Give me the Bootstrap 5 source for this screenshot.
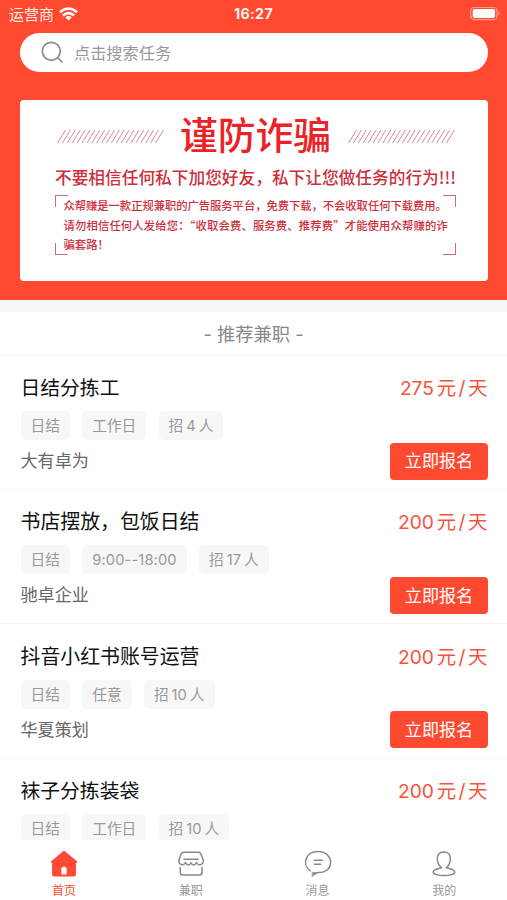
<!DOCTYPE html>
<html lang="zh-CN">
<head>
<meta charset="utf-8">
<meta name="viewport" content="width=device-width, initial-scale=1">
<title>推荐兼职</title>
<link href="https://cdn.jsdelivr.net/npm/bootstrap@5.3.0/dist/css/bootstrap.min.css" rel="stylesheet">
<style>
:root{--accent:#ff4a31}
body{font-family:Inter,"Noto Sans CJK SC",sans-serif;color:#111;line-height:1}
.app{height:900px}
.hero{background:var(--accent);height:300px;flex:none}
.status{height:33px;padding:0 6px 5px 9px;display:grid;grid-template-columns:1fr auto 1fr}
.carrier{font-size:15px;color:#ffe9e5}
.clock{font-size:14.2px;letter-spacing:.35px;color:#fff2f0;margin-right:3px}
.search{height:39px;margin:0 19px 0 20px;padding-left:21px;color:#999;font-size:16.2px}
.search span{margin-left:10px;padding-top:1px}
.banner{height:181px;margin:28px 19px 0 20px;border-radius:4px;padding:12px 32px 0 35px;font-family:"Noto Sans CJK SC",sans-serif;color:#cd2f3c}
.headline{height:48px}
.headline svg{margin-left:1px;margin-right:-1px}
.headline strong{font-size:37.8px;font-weight:500;color:#ec2227;padding-bottom:6px}
.warn{font-size:16.7px;font-weight:500;height:34px;line-height:34px}
.notice{width:401px;height:60px;margin-top:1px;padding:1px 0 0 8.5px;font-size:11.35px;font-weight:500;line-height:19.7px;
--c:linear-gradient(#d06a75,#d06a75);
background:var(--c) 0 0/13px 1px,var(--c) 0 0/1px 12px,var(--c) 100% 0/13px 1px,var(--c) 100% 0/1px 12px,var(--c) 0 100%/13px 1px,var(--c) 0 100%/1px 12px,var(--c) 100% 100%/13px 1px,var(--c) 100% 100%/1px 12px;background-repeat:no-repeat}
.line-a{letter-spacing:-.07px}
.line-b{letter-spacing:.13px}
.strip{height:12px;background:#f7f7f7;flex:none}
.heading{height:43.5px;padding-top:4px;color:#888;font-size:18.3px;flex:none;border-bottom:1px solid #f5f5f5}
.job{height:134.45px;padding:20.5px 19.5px 0 20.5px;border-bottom:1.5px solid #f6f6f6;flex:none}
.job-title{font-size:19.8px;line-height:25px;height:25px}
.job-title.wide{font-size:19.9px}
.price{font-size:19.4px;color:#f5533e;line-height:25px;gap:3px}
.price span{letter-spacing:2.5px;margin-right:-2.5px}
.price b{font-weight:400;font-size:19.2px;letter-spacing:-.1px}
.tags{gap:12.3px;margin-top:10px}
.tag{height:29px;padding:1px 10px 0;border-radius:5px;background:#f7f7f7;color:#999;font-size:14.7px;gap:3px}
.hours{letter-spacing:.12px}
.firm{font-size:17.1px;color:#666;padding-top:1px}
.apply{width:98px;height:37px;border-radius:4px;background:var(--accent);color:#fff;font-size:17.1px;margin:2.5px -.5px 0 0}
.tabs{height:60px;flex:none}
.tab{color:#999;font-size:12px;padding:7.5px 0 0 1.5px;gap:6.5px;text-decoration:none}
.tab.on{color:var(--accent)}
.tab svg{width:30px;height:31px}
</style>
<script src="https://cdn.jsdelivr.net/npm/bootstrap@5.3.0/dist/js/bootstrap.bundle.min.js"></script>
</head>
<body class="bg-white">
<div class="app d-flex flex-column overflow-hidden">
<header class="hero">
<div class="status align-items-center">
<div class="carrier d-flex align-items-center"><span>运营商</span>
<svg class="ms-1" width="21" height="15" viewBox="0 0 21 15" fill="none" stroke="#fff" stroke-width="2.5"><path d="M2 5.300Q10.500-2.300 19 5.300M5 8.500Q10.500 3.700 16 8.500"/><path d="M10.500 13.500L7.300 10.300Q10.500 7.800 13.700 10.300Z" fill="#fff" stroke="none"/></svg></div>
<div class="clock fw-bold">16:27</div>
<svg class="ms-auto" width="31" height="14" viewBox="0 0 31 14"><rect x=".8" y=".3" width="26.200" height="12.400" rx="3.800" fill="none" stroke="#ff9a8b" stroke-width="1.200"/><rect x="2.700" y="2.100" width="22.400" height="8.800" rx="2" fill="#fff"/><path d="M28.300 4.300Q31 6.500 28.300 8.700Z" fill="#ff9a8b"/></svg>
</div>
<div class="search bg-white rounded-pill d-flex align-items-center">
<svg width="23" height="23" viewBox="0 0 23 23" fill="none" stroke="#8c8c8c" stroke-width="1.700"><circle cx="10.300" cy="10.300" r="9"/><path d="M16.500 16.500L21.500 21.500"/></svg>
<span>点击搜索任务</span>
</div>
<section class="banner bg-white text-nowrap">
<div class="headline d-flex align-items-center justify-content-between">
<svg width="110" height="15" viewBox="0 0 110 15" fill="none" stroke="#d98a94" stroke-width="1"><path d="M1.500 14l8-13m-3.100 13l8-13m-3.100 13l8-13m-3.100 13l8-13m-3.100 13l8-13m-3.100 13l8-13m-3.100 13l8-13m-3.100 13l8-13m-3.100 13l8-13m-3.100 13l8-13m-3.100 13l8-13m-3.100 13l8-13m-3.100 13l8-13m-3.100 13l8-13m-3.100 13l8-13m-3.100 13l8-13m-3.100 13l8-13m-3.100 13l8-13m-3.100 13l8-13m-3.100 13l8-13m-3.100 13l8-13"/></svg>
<strong>谨防诈骗</strong>
<svg width="110" height="15" viewBox="0 0 110 15" fill="none" stroke="#d98a94" stroke-width="1"><path d="M1.500 14l8-13m-3.100 13l8-13m-3.100 13l8-13m-3.100 13l8-13m-3.100 13l8-13m-3.100 13l8-13m-3.100 13l8-13m-3.100 13l8-13m-3.100 13l8-13m-3.100 13l8-13m-3.100 13l8-13m-3.100 13l8-13m-3.100 13l8-13m-3.100 13l8-13m-3.100 13l8-13m-3.100 13l8-13m-3.100 13l8-13m-3.100 13l8-13m-3.100 13l8-13m-3.100 13l8-13m-3.100 13l8-13"/></svg>
</div>
<div class="warn">不要相信任何私下加您好友，私下让您做任务的行为!!!</div>
<div class="notice"><div class="line-a">众帮赚是一款正规兼职的广告服务平台，免费下载，不会收取任何下载费用。</div><div class="line-b">请勿相信任何人发给您：“收取会费、服务费、推荐费”才能使用众帮赚的诈</div><div>骗套路！</div></div>
</section>
</header>
<div class="strip"></div>
<main class="flex-grow-1 overflow-hidden d-flex flex-column">
<h2 class="heading m-0 fw-normal d-flex align-items-center justify-content-center">- 推荐兼职 -</h2>
<article class="job">
<div class="d-flex justify-content-between"><div class="job-title">日结分拣工</div><div class="price d-flex"><b>275</b><span>元/天</span></div></div>
<div class="tags d-flex"><div class="tag d-flex align-items-center">日结</div><div class="tag d-flex align-items-center">工作日</div><div class="tag d-flex align-items-center"><span>招</span><span>4</span><span>人</span></div></div>
<div class="d-flex justify-content-between align-items-center"><div class="firm">大有卓为</div><button class="apply btn border-0 p-0">立即报名</button></div>
</article>
<article class="job">
<div class="d-flex justify-content-between"><div class="job-title wide">书店摆放，包饭日结</div><div class="price d-flex"><b>200</b><span>元/天</span></div></div>
<div class="tags d-flex"><div class="tag d-flex align-items-center">日结</div><div class="tag hours d-flex align-items-center">9:00--18:00</div><div class="tag d-flex align-items-center"><span>招</span><span>17</span><span>人</span></div></div>
<div class="d-flex justify-content-between align-items-center"><div class="firm">驰卓企业</div><button class="apply btn border-0 p-0">立即报名</button></div>
</article>
<article class="job">
<div class="d-flex justify-content-between"><div class="job-title wide">抖音小红书账号运营</div><div class="price d-flex"><b>200</b><span>元/天</span></div></div>
<div class="tags d-flex"><div class="tag d-flex align-items-center">日结</div><div class="tag d-flex align-items-center">任意</div><div class="tag d-flex align-items-center"><span>招</span><span>10</span><span>人</span></div></div>
<div class="d-flex justify-content-between align-items-center"><div class="firm">华夏策划</div><button class="apply btn border-0 p-0">立即报名</button></div>
</article>
<article class="job">
<div class="d-flex justify-content-between"><div class="job-title">袜子分拣装袋</div><div class="price d-flex"><b>200</b><span>元/天</span></div></div>
<div class="tags d-flex"><div class="tag d-flex align-items-center">日结</div><div class="tag d-flex align-items-center">工作日</div><div class="tag d-flex align-items-center"><span>招</span><span>10</span><span>人</span></div></div>
</article>
</main>
<nav class="tabs row g-0 bg-white">
<a class="tab on col d-flex flex-column align-items-center"><svg viewBox="0 0 30 31" fill="currentColor"><path d="M14.100 3.300Q15 2.500 15.900 3.300L28.300 13.500Q28.500 14.700 27.500 14.700H26.900V26.600Q26.900 28.500 25 28.500H5Q3.100 28.500 3.100 26.600V14.700H2.500Q1.500 14.500 1.800 13.500ZM12.300 26.500H17.700V21.500Q17.700 18.800 15 18.800T12.300 21.500Z" fill-rule="evenodd"/></svg><span>首页</span></a>
<a class="tab col d-flex flex-column align-items-center"><svg viewBox="0 0 30 31" fill="none" stroke="#888" stroke-width="1.500" stroke-linecap="round" stroke-linejoin="round"><path d="M7.500 4.300H22.500Q24.200 4.300 25 6.300L27.200 11.800C27.800 16.800 22.500 18.500 20.500 14.500C19 17.800 16.200 17.800 15 14.800C13.800 17.800 11 17.800 9.500 14.500C7.500 18.500 2.300 16.800 2.900 11.800L5 6.300Q5.800 4.300 7.500 4.300ZM8 11.200H22M4.300 19.500V24.500Q4.300 27 6.800 27H23.500Q26 27 26 24.500V19.500"/></svg><span>兼职</span></a>
<a class="tab col d-flex flex-column align-items-center"><svg viewBox="0 0 30 31" fill="none" stroke="#888" stroke-width="1.500" stroke-linecap="round" stroke-linejoin="round"><path d="M7.300 22.800C-.7 17.500 1.200 3.800 15 3.600C31.500 3.600 32.200 25 15 24.600L12.800 25.300"/><path d="M9.500 24.300L14.500 24.800L9.300 28.500Z" fill="#888" stroke-width=".5"/><path d="M11.300 12.300H19.500M11.300 16.300H17.700"/></svg><span>消息</span></a>
<a class="tab col d-flex flex-column align-items-center"><svg viewBox="0 0 30 31" fill="none" stroke="#888" stroke-width="1.500" stroke-linecap="round" stroke-linejoin="round"><path d="M12.600 19.700C7 15 6 4.200 14.800 4.100C23.700 4.200 22.500 15 17.300 19.700C20.500 20.600 25.700 21 25.800 24C26 28.700 4 28.700 4.200 24C4.300 21 9.500 20.600 12.600 19.700Z"/></svg><span>我的</span></a>
</nav>
</div>
</body>
</html>
